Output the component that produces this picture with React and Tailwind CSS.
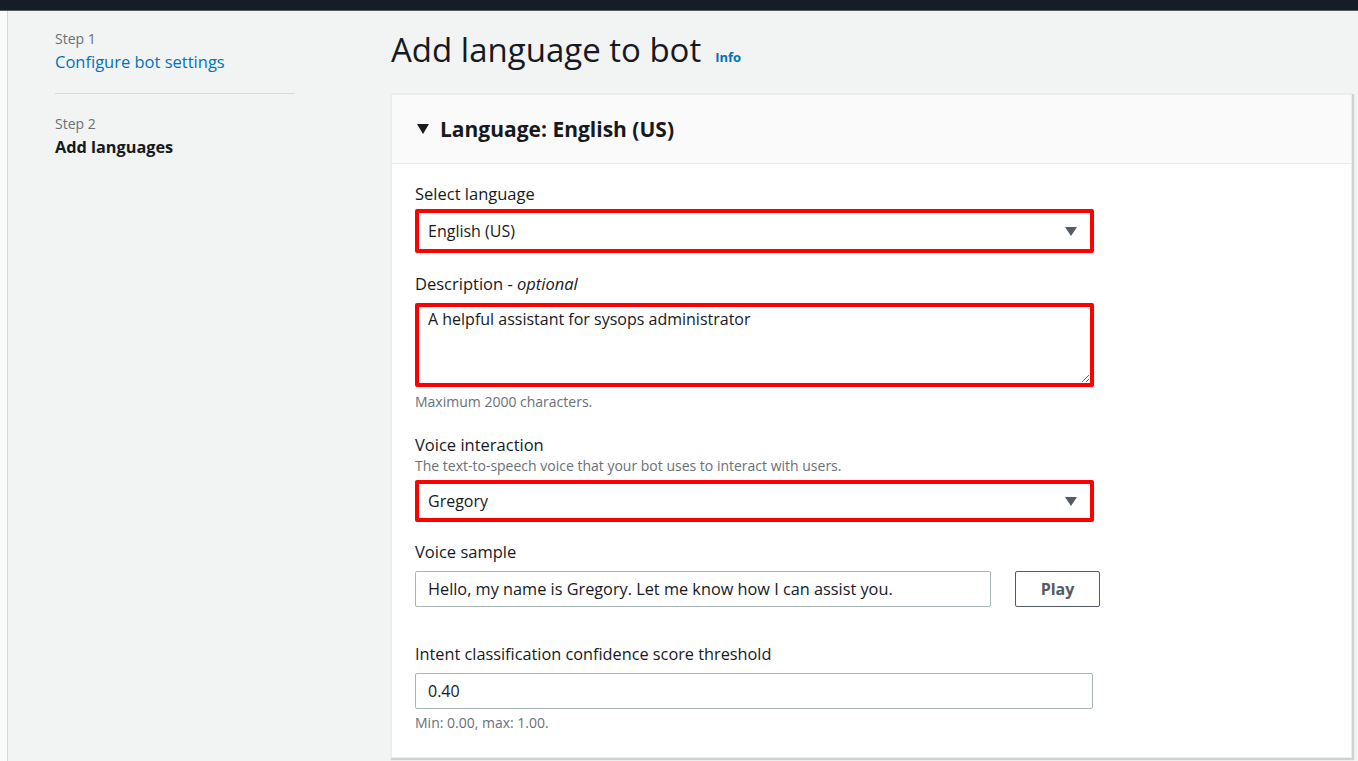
import { useState } from 'react';

const FIELD_BORDER = 'border border-[#aab7b8] rounded-[2px]';

function Caret() {
  return (
    <svg width="12" height="9" viewBox="0 0 12 9" className="shrink-0">
      <path d="M0 0 H12 L6 9 Z" fill="#545b64" />
    </svg>
  );
}

function StepNav() {
  return (
    <nav className="w-[240px] ml-[47px] pt-[18px] shrink-0">
      <p className="text-[14px] leading-[20px] text-[#687078]">Step 1</p>
      <a className="block text-[16.5px] leading-[24px] text-[#0073bb] mt-[1px]">Configure bot settings</a>
      <div className="border-t border-[#d5dbdb] mt-[19px] mb-[20px]" />
      <p className="text-[14px] leading-[20px] text-[#687078]">Step 2</p>
      <p className="text-[16.3px] leading-[24px] font-bold text-[#16191f] mt-[1px]">Add languages</p>
    </nav>
  );
}

export default function App() {
  const [desc, setDesc] = useState('A helpful assistant for sysops administrator');
  const [sample, setSample] = useState('Hello, my name is Gregory. Let me know how I can assist you.');
  const [threshold, setThreshold] = useState('0.40');

  return (
    <div className="min-h-screen bg-[#f2f3f3] font-['Open_Sans',sans-serif] text-[#16191f]">
      {/* top bar */}
      <div className="h-[11px] bg-[#161d26] border-b border-[#545b64]" />

      <div className="flex">
        <div className="w-[8px] shrink-0 bg-[#fafafa] border-r border-[#d5dbdb] min-h-[750px]" />
        <StepNav />

        <main className="ml-[96px] pt-[21px]">
          <div className="flex items-baseline gap-[14px] h-[39px]">
            <h1 className="text-[33px] leading-[38px] font-normal mt-[-1px]">Add language to bot</h1>
            <a className="text-[13px] font-bold text-[#0073bb]">Info</a>
          </div>

          <section className="mt-[23px] w-[961px] bg-white border border-[#eaeded] shadow-[1px_1px_1px_1px_rgba(0,28,36,0.15)]">
            <header className="h-[69px] bg-[#fafafa] border-b border-[#eaeded] flex items-center pl-[25px] gap-[11px]">
              <svg width="12" height="10" viewBox="0 0 12 10">
                <path d="M0 0 H12 L6 10 Z" fill="#16191f" />
              </svg>
              <h2 className="text-[21px] font-bold leading-[28px]">Language: English (US)</h2>
            </header>

            <div className="pl-[23px] pt-[19px] pb-[25px] flex flex-col">
              <label className="text-[16.5px] leading-[22px]">Select language</label>
              <div className="mt-[4px] w-[679px] h-[44px] border-4 border-[#ff0000] rounded-[2px] flex items-center justify-between pl-[9px] pr-[13px]">
                <span className="text-[16px]">English (US)</span>
                <Caret />
              </div>

              <label className="mt-[20px] text-[16.5px] leading-[22px]">
                Description - <i>optional</i>
              </label>
              <textarea
                value={desc}
                onChange={e => setDesc(e.target.value)}
                className="mt-[8px] w-[679px] h-[84px] border-4 border-[#ff0000] rounded-[2px] px-[9px] pt-[1px] text-[16px] leading-[22px] outline-none"
              />
              <p className="mt-[6px] text-[14px] leading-[18px] text-[#687078]">Maximum 2000 characters.</p>

              <label className="mt-[23px] text-[16.5px] leading-[22px]">Voice interaction</label>
              <p className="mt-[1px] text-[14px] leading-[18px] text-[#687078]">The text-to-speech voice that your bot uses to interact with users.</p>
              <div className="mt-[5px] w-[679px] h-[42px] border-4 border-[#ff0000] rounded-[2px] flex items-center justify-between pl-[9px] pr-[13px]">
                <span className="text-[16px]">Gregory</span>
                <Caret />
              </div>

              <label className="mt-[19px] text-[16.5px] leading-[22px]">Voice sample</label>
              <div className="mt-[8px] flex items-center gap-[24px]">
                <input
                  value={sample}
                  onChange={e => setSample(e.target.value)}
                  className={`w-[576px] h-[36px] ${FIELD_BORDER} px-[12px] text-[16.3px] outline-none`}
                />
                <button className="w-[85px] h-[36px] border border-[#545b64] rounded-[2px] text-[16px] font-bold text-[#545b64]">
                  Play
                </button>
              </div>

              <label className="mt-[36px] text-[16.3px] leading-[22px]">Intent classification confidence score threshold</label>
              <input
                value={threshold}
                onChange={e => setThreshold(e.target.value)}
                className={`mt-[8px] w-[678px] h-[36px] ${FIELD_BORDER} px-[12px] text-[16px] outline-none`}
              />
              <p className="mt-[5px] text-[14px] leading-[18px] text-[#687078]">Min: 0.00, max: 1.00.</p>
            </div>
          </section>
        </main>
      </div>
    </div>
  );
}
